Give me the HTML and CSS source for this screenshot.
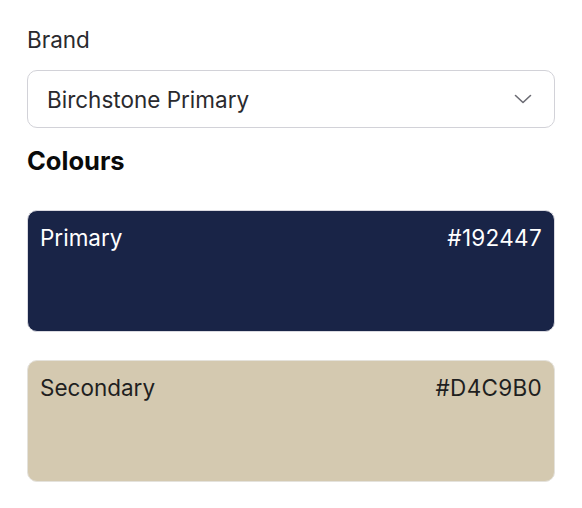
FILE: index.html
```html
<!DOCTYPE html>
<html lang="en">
<head>
<meta charset="utf-8">
<link rel="stylesheet" href="styles.css">
</head>
<body>
<div class="panel">
  <label class="field-label" for="brand">Brand</label>
  <div class="select">
    <span class="select-value">Birchstone Primary</span>
    <svg class="chevron" width="18" height="10" viewBox="0 0 18 10" fill="none" stroke="#6b6b73" stroke-width="1.6" stroke-linecap="round" stroke-linejoin="round"><path d="M1.5 1.5 L9 8.5 L16.5 1.5"/></svg>
  </div>
  <h2 class="section-title">Colours</h2>
  <div class="swatches">
    <div class="swatch swatch-primary">
      <span class="swatch-name">Primary</span>
      <span class="swatch-hex">#192447</span>
    </div>
    <div class="swatch swatch-secondary">
      <span class="swatch-name">Secondary</span>
      <span class="swatch-hex">#D4C9B0</span>
    </div>
  </div>
</div>
</body>
</html>
```
FILE: styles.css
```css
html, body { margin: 0; padding: 0; background: #fff; }
body { font-family: Inter, "Noto Sans", sans-serif; color: #27272a; }
.panel { padding: 24px 27px 0 27px; display: flex; flex-direction: column; }
.field-label { font-size: 22.5px; line-height: 32px; color: #2a2a2e; }
.select {
  margin-top: 14px;
  height: 58px;
  box-sizing: border-box;
  border: 1.5px solid #d2d2d8;
  border-radius: 10px;
  display: flex; align-items: center; justify-content: space-between;
  padding: 0 22px 0 19px;
}
.select-value { font-size: 22.5px; color: #2a2a2e; }
.chevron { display: block; }
.section-title { margin: 18px 0 0 0; font-size: 25.5px; line-height: 30px; font-weight: 700; color: #0a0a0a; }
.swatches { margin-top: 34px; display: flex; flex-direction: column; gap: 28px; }
.swatch {
  height: 122px; box-sizing: border-box;
  border-radius: 10px;
  border: 1px solid #d9d9e0;
  padding: 12px 12px 0 12px;
  display: flex; justify-content: space-between; align-items: flex-start;
  font-size: 22.5px; line-height: 30px;
}
.swatch-hex { letter-spacing: 0.3px; }
.swatch-primary { background: #192447; color: #fff; }
.swatch-secondary { background: #D4C9B0; color: #1f1f1f; border-color: #e4e2dc; }
```
